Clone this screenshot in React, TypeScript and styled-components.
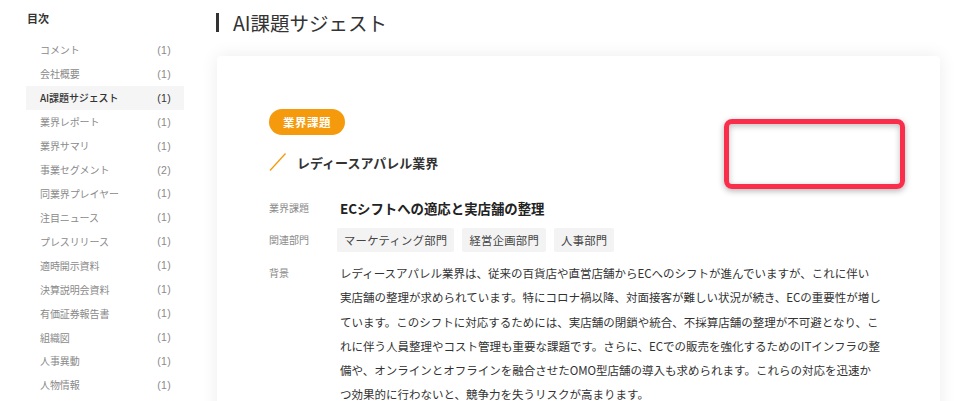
import styled, { createGlobalStyle } from 'styled-components';

const orange = '#f59a0c';
const textDark = '#333333';
const textGrey = '#8a8a8a';

const GlobalStyle = createGlobalStyle`
  html, body {
    margin: 0;
    padding: 0;
    background: #ffffff;
    overflow: hidden;
  }
  body {
    font-family: 'Noto Sans CJK JP', 'Liberation Sans', sans-serif;
    color: ${textDark};
  }
`;

const Page = styled.div`
  display: flex;
  width: 976px;
  height: 401px;
  overflow: hidden;
`;

const Sidebar = styled.nav`
  width: 158px;
  flex-shrink: 0;
  padding: 8px 0 0 26px;
`;

const TocTitle = styled.div`
  font-size: 11px;
  font-weight: 700;
  line-height: 20px;
  padding-left: 1px;
  margin-bottom: 10px;
  color: ${textDark};
`;

const TocList = styled.ul`
  list-style: none;
  margin: 0;
  padding: 0;
`;

const TocItem = styled.li<{ $active?: boolean }>`
  display: flex;
  justify-content: space-between;
  align-items: center;
  height: 23.93px;
  padding: 0 13px 0 14px;
  font-size: 10px;
  letter-spacing: -0.1px;
  background: ${({ $active }) => ($active ? '#f5f5f5' : 'transparent')};
  color: ${({ $active }) => ($active ? textDark : textGrey)};
  font-weight: ${({ $active }) => ($active ? 500 : 400)};
`;

const Count = styled.span<{ $active?: boolean }>`
  font-family: 'Liberation Sans', sans-serif;
  font-size: 10.5px;
  font-weight: 400;
  letter-spacing: 0.3px;
  color: ${({ $active }) => ($active ? textDark : textGrey)};
`;

const Main = styled.main`
  flex: 1;
  padding: 0 36px 0 32px;
  min-width: 0;
`;

const PageTitle = styled.h1`
  display: flex;
  align-items: center;
  margin: 0;
  height: 44px;
  font-size: 19.5px;
  font-weight: 400;
  color: ${textDark};
  &::before {
    content: '';
    width: 3px;
    height: 19px;
    background: ${textDark};
    margin-right: 14px;
  }
`;

const Card = styled.section`
  position: relative;
  margin-top: 12px;
  margin-left: 1px;
  background: #ffffff;
  border-radius: 4px;
  box-shadow: 0 0 18px rgba(0, 0, 0, 0.08);
  padding: 52px 52px 40px 52px;
  min-height: 400px;
`;

const Badge = styled.span`
  display: inline-flex;
  align-items: center;
  height: 26px;
  padding: 0 14px;
  border-radius: 13px;
  background: ${orange};
  color: #ffffff;
  font-size: 11.5px;
  font-weight: 700;
  letter-spacing: 0.5px;
`;

const Heading = styled.h2`
  display: flex;
  align-items: center;
  gap: 11px;
  margin: 17px 0 0 0;
  height: 20px;
  font-size: 13px;
  font-weight: 700;
  color: ${textDark};
`;

const Rows = styled.div`
  margin-top: 24px;
  display: flex;
  flex-direction: column;
`;

const Row = styled.div<{ $gap?: number }>`
  display: grid;
  grid-template-columns: 71px 1fr;
  align-items: start;
  margin-top: ${({ $gap }) => $gap ?? 0}px;
`;

const Label = styled.div<{ $height: number }>`
  font-size: 10px;
  color: ${textGrey};
  line-height: ${({ $height }) => $height}px;
`;

const Issue = styled.div`
  font-size: 13.4px;
  font-weight: 700;
  line-height: 24px;
  color: #222222;
`;

const Tags = styled.div`
  display: flex;
  gap: 8px;
  margin-left: -3px;
`;

const Tag = styled.span`
  display: inline-flex;
  align-items: center;
  height: 24px;
  padding: 0 7px;
  background: #f3f3f3;
  border-radius: 2px;
  font-size: 11.3px;
  color: #444444;
  letter-spacing: 0.3px;
`;

const Body = styled.p`
  margin: 0;
  font-size: 11.5px;
  line-height: 24.3px;
  color: ${textDark};
`;

const BodyLine = styled.span`
  display: block;
  white-space: nowrap;
`;

const Highlight = styled.div`
  position: absolute;
  left: 507px;
  top: 63px;
  width: 171px;
  height: 60px;
  border: 5px solid #fa2d4b;
  border-radius: 8px;
  box-shadow: 0 2px 6px rgba(0, 0, 0, 0.3), inset 0 2px 6px rgba(0, 0, 0, 0.25);
`;

const toc = [
  { name: 'コメント', count: 1 },
  { name: '会社概要', count: 1 },
  { name: 'AI課題サジェスト', count: 1, active: true },
  { name: '業界レポート', count: 1 },
  { name: '業界サマリ', count: 1 },
  { name: '事業セグメント', count: 2 },
  { name: '同業界プレイヤー', count: 1 },
  { name: '注目ニュース', count: 1 },
  { name: 'プレスリリース', count: 1 },
  { name: '適時開示資料', count: 1 },
  { name: '決算説明会資料', count: 1 },
  { name: '有価証券報告書', count: 1 },
  { name: '組織図', count: 1 },
  { name: '人事異動', count: 1 },
  { name: '人物情報', count: 1 },
];

const departments = ['マーケティング部門', '経営企画部門', '人事部門'];

// wrapped as in the original layout
const backgroundLines = [
  'レディースアパレル業界は、従来の百貨店や直営店舗からECへのシフトが進んでいますが、これに伴い',
  '実店舗の整理が求められています。特にコロナ禍以降、対面接客が難しい状況が続き、ECの重要性が増し',
  'ています。このシフトに対応するためには、実店舗の閉鎖や統合、不採算店舗の整理が不可避となり、こ',
  'れに伴う人員整理やコスト管理も重要な課題です。さらに、ECでの販売を強化するためのITインフラの整',
  '備や、オンラインとオフラインを融合させたOMO型店舗の導入も求められます。これらの対応を迅速か',
  'つ効果的に行わないと、競争力を失うリスクが高まります。',
];

const Slash = () => (
  <svg width='17' height='18' viewBox='0 0 17 18'>
    <line x1='1' y1='17.5' x2='16.5' y2='0.5' stroke={orange} strokeWidth='1.3' />
  </svg>
);

const App = () => {
  return (
    <Page>
      <GlobalStyle />
      <Sidebar>
        <TocTitle>目次</TocTitle>
        <TocList>
          {toc.map((item) => (
            <TocItem key={item.name} $active={item.active}>
              <span>{item.name}</span>
              <Count $active={item.active}>({item.count})</Count>
            </TocItem>
          ))}
        </TocList>
      </Sidebar>
      <Main>
        <PageTitle>AI課題サジェスト</PageTitle>
        <Card>
          <Badge>業界課題</Badge>
          <Heading>
            <Slash />
            レディースアパレル業界
          </Heading>
          <Rows>
            <Row>
              <Label $height={24}>業界課題</Label>
              <Issue>ECシフトへの適応と実店舗の整理</Issue>
            </Row>
            <Row $gap={8}>
              <Label $height={24}>関連部門</Label>
              <Tags>
                {departments.map((d) => (
                  <Tag key={d}>{d}</Tag>
                ))}
              </Tags>
            </Row>
            <Row $gap={9}>
              <Label $height={24.3}>背景</Label>
              <Body>
                {backgroundLines.map((line) => (
                  <BodyLine key={line}>{line}</BodyLine>
                ))}
              </Body>
            </Row>
          </Rows>
          <Highlight />
        </Card>
      </Main>
    </Page>
  );
};

export default App;
